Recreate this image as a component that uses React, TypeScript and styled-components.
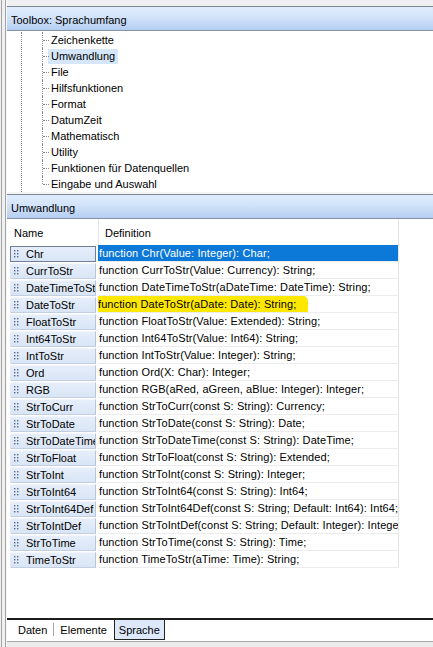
import React from 'react'
import styled, { createGlobalStyle } from 'styled-components'

const GlobalStyle = createGlobalStyle`
  html, body {
    margin: 0;
    padding: 0;
  }
  body {
    background: #f0f0f0;
    font-family: "Liberation Sans", Arial, sans-serif;
    font-size: 11px;
    color: #000;
  }
`

const Window = styled.div`
  display: flex;
  width: 433px;
  height: 647px;
  overflow: hidden;
  background: #f0f0f0;
`

const LeftEdge = styled.div`
  width: 7px;
  flex: none;
  background: linear-gradient(
    to right,
    #f0f0f0 0 1px,
    #a3a3a3 1px 2px,
    #f0f0f0 2px 5px,
    #a3a3a3 5px 6px,
    #f7f7f7 6px 7px
  );
`

const Panel = styled.div`
  flex: 1;
  display: flex;
  flex-direction: column;
  padding-top: 6px;
  min-width: 0;
`

const SectionHeader = styled.div`
  height: 25px;
  box-sizing: border-box;
  flex: none;
  display: flex;
  align-items: center;
  padding: 2px 0 0 4px;
  border-top: 1px solid #7e8794;
  border-bottom: 1px solid #8792a2;
  background: linear-gradient(to bottom, #e0ecfc 0%, #d2e3fa 45%, #b4cef2 100%);
  font-size: 11px;
`

const Tree = styled.div`
  height: 161px;
  flex: none;
  box-sizing: border-box;
  background: #fff;
  padding: 1px 0 0 14px;
  overflow: hidden;
`

const RootBranch = styled.div`
  height: 100%;
  border-left: 1px dotted #8a8a8a;
  padding-left: 20px;
`

const TreeItem = styled.div<{ $last?: boolean }>`
  position: relative;
  height: 16px;
  display: flex;
  align-items: center;
  padding-left: 6px;

  &::before {
    content: '';
    position: absolute;
    left: 0;
    top: 0;
    height: ${(p) => (p.$last ? '8px' : '16px')};
    border-left: 1px dotted #8a8a8a;
  }
  &::after {
    content: '';
    position: absolute;
    left: 1px;
    top: 8px;
    width: 6px;
    border-top: 1px dotted #8a8a8a;
  }
`

const TreeLabel = styled.span<{ $selected?: boolean }>`
  padding: 1px 3px;
  line-height: 13px;
  background: ${(p) => (p.$selected ? '#d4e6f8' : 'transparent')};
`

const Splitter = styled.div`
  height: 2px;
  flex: none;
  background: #f4f4f4;
`

const GridArea = styled.div`
  flex: 1;
  background: #fff;
  display: flex;
  flex-direction: column;
  min-height: 0;
`

const GridTable = styled.div`
  width: 391px;
  border-right: 1px solid #e6e6e6;
`

const ColHeaderRow = styled.div`
  display: grid;
  grid-template-columns: 91px 300px;
  height: 26px;
`

const ColHeader = styled.div<{ $first?: boolean }>`
  display: flex;
  align-items: center;
  padding-left: ${(p) => (p.$first ? '7px' : '6px')};
  padding-top: 2px;
  border-left: ${(p) => (p.$first ? 'none' : '1px solid #e4e4e4')};
`

const Row = styled.div`
  display: grid;
  grid-template-columns: 91px 300px;
  height: 17px;
`

const NameWrap = styled.div`
  padding: 1px 2px 0 3px;
`

const NameCell = styled.div<{ $selected?: boolean }>`
  height: 16px;
  box-sizing: border-box;
  display: flex;
  align-items: center;
  gap: 6px;
  padding-left: 3px;
  background: linear-gradient(to bottom, #e6eefa, #d9e5f6);
  border: 1px solid ${(p) => (p.$selected ? '#6f7f99' : 'transparent')};
  border-right-color: ${(p) => (p.$selected ? '#6f7f99' : '#b7c5d9')};
  border-bottom-color: ${(p) => (p.$selected ? '#6f7f99' : '#c3d0e2')};
  border-top-color: ${(p) => (p.$selected ? '#6f7f99' : '#f3f7fd')};
  white-space: nowrap;
  overflow: hidden;
`

const DefCell = styled.div<{ $selected?: boolean }>`
  display: flex;
  align-items: center;
  padding-left: 1px;
  border-bottom: 1px solid #ececec;
  box-sizing: border-box;
  white-space: nowrap;
  overflow: hidden;
  letter-spacing: 0.1px;
  background: ${(p) => (p.$selected ? '#0c78d8' : '#fff')};
  color: ${(p) => (p.$selected ? '#fff' : '#000')};
`

const Marker = styled.span`
  display: flex;
  align-items: center;
  height: 17px;
  margin-left: -3px;
  padding: 0 12px 0 2px;
  background: #ffe800;
  border-radius: 1px 5px 3px 1px;
`

const TabBar = styled.div`
  flex: none;
  display: flex;
  align-items: stretch;
  height: 21px;
  padding-left: 7px;
  border-top: 2px solid #1e1e1e;
  background: #fff;
`

const Tab = styled.div<{ $active?: boolean }>`
  display: flex;
  align-items: center;
  height: 19px;
  padding: 0 ${(p) => (p.$active ? '4px' : '3px')};
  margin: 0 ${(p) => (p.$active ? '0' : '2px')} 0 ${(p) => (p.$active ? '1px' : '0')};
  background: ${(p) => (p.$active ? '#dde9fa' : 'transparent')};
  border: 1px solid ${(p) => (p.$active ? '#222' : 'transparent')};
  border-top: none;
`

const TabSep = styled.div`
  width: 1px;
  margin: 3px 2px 5px 0;
  background: #a8a8a8;
`

const BottomStrip = styled.div`
  flex: none;
  height: 5px;
  border-top: 1px solid #a5a5a5;
  background: #ececec;
`

const Grip = () => (
  <svg width="6" height="8" viewBox="0 0 6 8" style={{ flex: 'none' }}>
    {[0, 3, 6].map((y) =>
      [0, 3].map((x) => <rect key={`${x}-${y}`} x={x} y={y} width="1.4" height="1.4" fill="#56698a" />)
    )}
  </svg>
)

const treeItems = [
  'Zeichenkette',
  'Umwandlung',
  'File',
  'Hilfsfunktionen',
  'Format',
  'DatumZeit',
  'Mathematisch',
  'Utility',
  'Funktionen für Datenquellen',
  'Eingabe und Auswahl',
]

const functions: [string, string][] = [
  ['Chr', 'function Chr(Value: Integer): Char;'],
  ['CurrToStr', 'function CurrToStr(Value: Currency): String;'],
  ['DateTimeToStr', 'function DateTimeToStr(aDateTime: DateTime): String;'],
  ['DateToStr', 'function DateToStr(aDate: Date): String;'],
  ['FloatToStr', 'function FloatToStr(Value: Extended): String;'],
  ['Int64ToStr', 'function Int64ToStr(Value: Int64): String;'],
  ['IntToStr', 'function IntToStr(Value: Integer): String;'],
  ['Ord', 'function Ord(X: Char): Integer;'],
  ['RGB', 'function RGB(aRed, aGreen, aBlue: Integer): Integer;'],
  ['StrToCurr', 'function StrToCurr(const S: String): Currency;'],
  ['StrToDate', 'function StrToDate(const S: String): Date;'],
  ['StrToDateTime', 'function StrToDateTime(const S: String): DateTime;'],
  ['StrToFloat', 'function StrToFloat(const S: String): Extended;'],
  ['StrToInt', 'function StrToInt(const S: String): Integer;'],
  ['StrToInt64', 'function StrToInt64(const S: String): Int64;'],
  ['StrToInt64Def', 'function StrToInt64Def(const S: String; Default: Int64): Int64;'],
  ['StrToIntDef', 'function StrToIntDef(const S: String; Default: Integer): Integer;'],
  ['StrToTime', 'function StrToTime(const S: String): Time;'],
  ['TimeToStr', 'function TimeToStr(aTime: Time): String;'],
]

export default function App() {
  return (
    <>
      <GlobalStyle />
      <Window>
        <LeftEdge />
        <Panel>
          <SectionHeader>Toolbox: Sprachumfang</SectionHeader>
          <Tree>
            <RootBranch>
              {treeItems.map((t, i) => (
                <TreeItem key={t} $last={i === treeItems.length - 1}>
                  <TreeLabel $selected={t === 'Umwandlung'}>{t}</TreeLabel>
                </TreeItem>
              ))}
            </RootBranch>
          </Tree>
          <Splitter />
          <SectionHeader>Umwandlung</SectionHeader>
          <GridArea>
            <GridTable>
              <ColHeaderRow>
                <ColHeader $first>Name</ColHeader>
                <ColHeader>Definition</ColHeader>
              </ColHeaderRow>
              {functions.map(([name, def]) => (
                <Row key={name}>
                  <NameWrap>
                    <NameCell $selected={name === 'Chr'}>
                      <Grip />
                      {name}
                    </NameCell>
                  </NameWrap>
                  <DefCell $selected={name === 'Chr'}>
                    {name === 'DateToStr' ? <Marker>{def}</Marker> : def}
                  </DefCell>
                </Row>
              ))}
            </GridTable>
          </GridArea>
          <TabBar>
            <Tab>Daten</Tab>
            <TabSep />
            <Tab>Elemente</Tab>
            <Tab $active>Sprache</Tab>
          </TabBar>
          <BottomStrip />
        </Panel>
      </Window>
    </>
  )
}
